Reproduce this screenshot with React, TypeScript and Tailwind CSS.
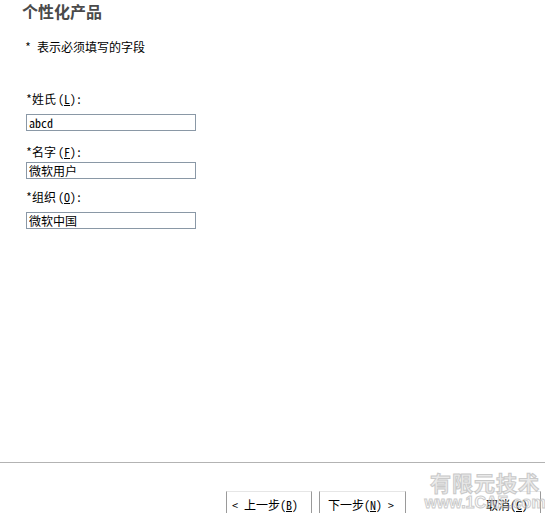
import React from "react";

type Field = {
  label: string;
  key: string;
  value: string;
  labelMt: string;
  inputMt: string;
};

const fields: Field[] = [
  { label: "*姓氏", key: "L", value: "abcd", labelMt: "mt-[36px]", inputMt: "mt-[7px]" },
  { label: "*名字", key: "F", value: "微软用户", labelMt: "mt-[13px]", inputMt: "mt-[2px]" },
  { label: "*组织", key: "O", value: "微软中国", labelMt: "mt-[10px]", inputMt: "mt-[7px]" },
];

// half-width latin + full-width CJK, like the old SimSun bitmap font
const font = "font-['Noto_Sans_Mono_CJK_SC','Noto_Sans_CJK_SC',monospace]";

function Label({ text, accel }: { text: string; accel: string }) {
  return (
    <div className="h-[16px] leading-[16px] text-[12px] text-black">
      {text}
      <span className="ml-[2px]">
        (<span className="underline">{accel}</span>):
      </span>
    </div>
  );
}

function WizardButton({ children, className }: { children: React.ReactNode; className?: string }) {
  return (
    <button
      className={
        "h-[22px] border-x border-t border-x-[#9a9a9a] border-t-[#e6e6e6] bg-white text-[12px] leading-[18px] text-black pt-[4px] whitespace-nowrap " +
        (className ?? "")
      }
    >
      {children}
    </button>
  );
}

export default function App() {
  return (
    <div className={"relative w-[545px] h-[513px] bg-white overflow-hidden flex flex-col " + font}>
      <h1 className="pl-[22px] pt-[1px] h-[20px] text-[16px] leading-[20px] font-bold text-[#4a4a4a] font-['Noto_Sans_CJK_SC',sans-serif]">
        个性化产品
      </h1>
      <div className="mt-[19px] pl-[25px] h-[16px] text-[12px] leading-[16px] text-black">
        * 表示必须填写的字段
      </div>

      <div className="flex flex-col pl-[26px]">
        {fields.map((f) => (
          <div key={f.key} className="flex flex-col">
            <div className={f.labelMt}>
              <Label text={f.label} accel={f.key} />
            </div>
            <input
              readOnly
              value={f.value}
              className={
                "w-[170px] h-[17px] border border-[#8a98a6] px-[2px] text-[12px] leading-[15px] text-black outline-none " +
                f.inputMt
              }
            />
          </div>
        ))}
      </div>

      <div className="flex-1" />

      <div className="h-[31px] border-t border-[#b3b3b3]" />

      <div className="flex items-end pl-[226px] h-[20px]">
        <WizardButton className="w-[86px] text-left pl-[5px]">
          &lt; 上一步(<span className="underline">B</span>)
        </WizardButton>
        <WizardButton className="ml-[7px] w-[87px] text-left pl-[8px]">
          下一步(<span className="underline">N</span>) &gt;
        </WizardButton>
        <WizardButton className="ml-[60px] w-[75px] text-left pl-[19px] border-l-transparent">
          取消(<span className="underline">C</span>)
        </WizardButton>
      </div>

      <div className="absolute left-[428px] top-[470px] w-[114px] flex flex-col items-center pointer-events-none whitespace-nowrap opacity-80">
        <div className="text-[21px] leading-[24px] font-bold text-[#e6e6e6] [-webkit-text-stroke:1px_#bcbcbc] tracking-[1px] font-['Noto_Sans_CJK_SC',sans-serif]">
          有限元技术
        </div>
        <div className="text-[16px] leading-[17px] font-bold text-transparent [-webkit-text-stroke:1px_#c0c0c0] font-['Liberation_Sans',sans-serif]">
          www.1CAE.com
        </div>
      </div>
    </div>
  );
}
